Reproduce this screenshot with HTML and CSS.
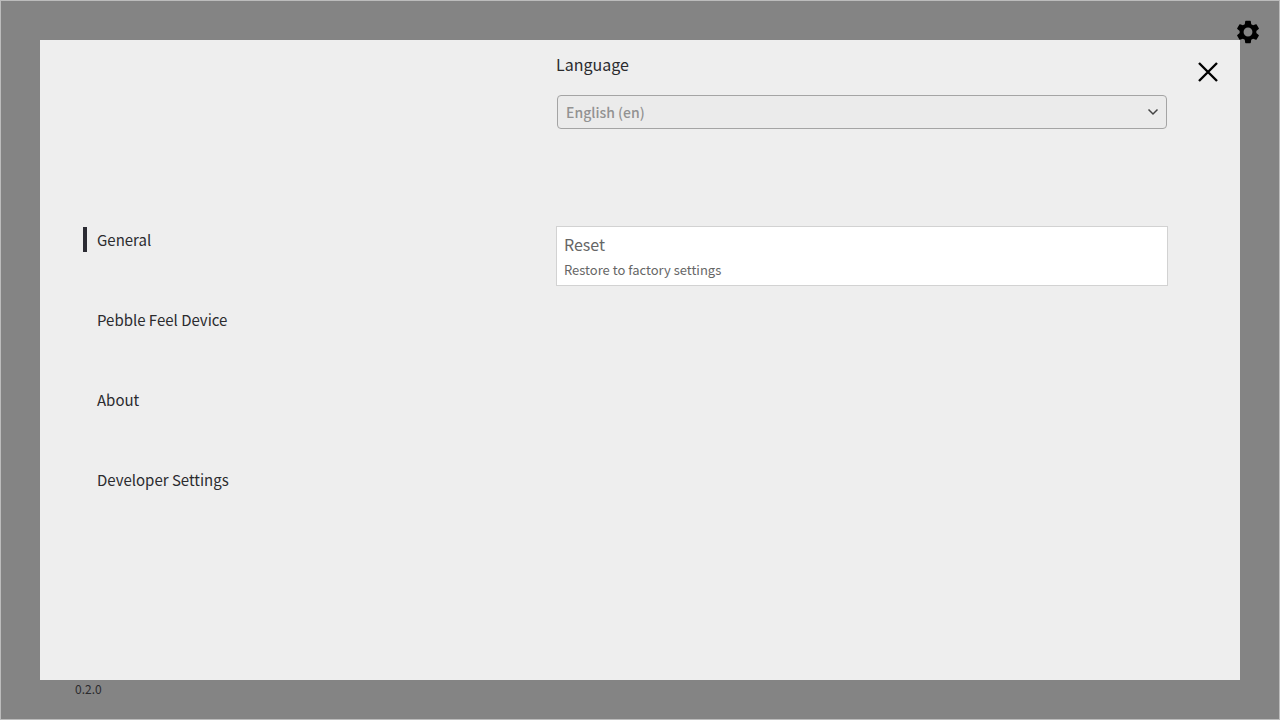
FILE: index.html
```html
<!DOCTYPE html>
<html lang="en">
<head>
<meta charset="UTF-8">
<meta name="viewport" content="width=device-width,initial-scale=1.0">
<title>Settings</title>
<link rel="stylesheet" href="styles.css">
</head>
<body>

<button class="gear" aria-label="Settings">
  <svg viewBox="0 0 24 24" width="28" height="28"><path d="M19.14 12.94c.04-.3.06-.61.06-.94 0-.32-.02-.64-.07-.94l2.03-1.58c.18-.14.23-.41.12-.61l-1.92-3.32c-.12-.22-.37-.29-.59-.22l-2.39.96c-.5-.38-1.03-.7-1.62-.94l-.36-2.54c-.04-.24-.24-.41-.48-.41h-3.84c-.24 0-.43.17-.47.41l-.36 2.54c-.59.24-1.13.57-1.62.94l-2.39-.96c-.22-.08-.47 0-.59.22L2.74 8.87c-.12.21-.08.47.12.61l2.03 1.58c-.05.3-.09.63-.09.94s.02.64.07.94l-2.03 1.58c-.18.14-.23.41-.12.61l1.92 3.32c.12.22.37.29.59.22l2.39-.96c.5.38 1.03.7 1.62.94l.36 2.54c.05.24.24.41.48.41h3.84c.24 0 .44-.17.47-.41l.36-2.54c.59-.24 1.13-.56 1.62-.94l2.39.96c.22.08.47 0 .59-.22l1.92-3.32c.12-.22.07-.47-.12-.61l-2.01-1.58zM12 15.8a3.8 3.8 0 1 1 0-7.6 3.8 3.8 0 0 1 0 7.6z"/></svg>
</button>

<main class="panel">
  <nav class="menu">
    <button class="menu-item active">General</button>
    <button class="menu-item">Pebble Feel Device</button>
    <button class="menu-item">About</button>
    <button class="menu-item">Developer Settings</button>
  </nav>

  <section class="content">
    <div class="field">
      <label for="language">Language</label>
      <div class="select-box">
        <select id="language">
          <option>English (en)</option>
        </select>
        <svg class="chevron" viewBox="0 0 12 12" width="12" height="12"><path d="M1.5 3.5L6 8l4.5-4.5"/></svg>
      </div>
    </div>

    <button class="reset">
      <span class="reset-title">Reset</span>
      <span class="reset-text">Restore to factory settings</span>
    </button>
  </section>

  <button class="close" aria-label="Close">
    <svg viewBox="0 0 24 24" width="24" height="24"><path d="M3 3l18 18M21 3L3 21"/></svg>
  </button>
</main>

<footer class="version">0.2.0</footer>

</body>
</html>
```
FILE: styles.css
```css
:root{
  --backdrop:#848484; --panel:#eee; --text:#2b2b2e; --muted:#666; --bar:#2b2b33;
}
*{box-sizing:border-box;margin:0;padding:0;font-family:"Noto Sans CJK JP","Noto Sans",sans-serif}
body{min-height:100vh;display:flex;flex-direction:column;padding:39px 39px 0;background:var(--backdrop);border:1px solid #bcbcbc;color:var(--text)}
button{border:none;background:none;color:inherit;text-align:left;cursor:pointer}
svg{display:block}

/* panel */
.panel{flex:1;display:grid;grid-template-columns:43% 51% 1fr;background:var(--panel)}

/* left menu */
.menu{display:flex;flex-direction:column;justify-content:center;align-items:flex-start;gap:55px;padding:0 0 2px 43px}
.menu-item{height:25px;padding-left:10px;border-left:4px solid transparent;font-size:15px;line-height:25px}
.menu-item.active{border-left-color:var(--bar)}

/* settings */
.content{display:flex;flex-direction:column;gap:97px;padding-top:12px}
.field{display:flex;flex-direction:column;gap:19px}
.field label{font-size:16px;line-height:24px}
.select-box{position:relative;margin:0 1px}
.select-box select{display:block;width:100%;height:34px;padding:0 32px 0 8px;border:1px solid #a4a4a4;border-radius:4px;background:#ebebeb;color:#929292;font-size:14px;font-weight:500;appearance:none}
.chevron{position:absolute;top:11px;right:8px;fill:none;stroke:#444;stroke-width:1.5;pointer-events:none}
.reset{display:flex;flex-direction:column;gap:4px;padding:5px 7px;border:1px solid #d2d2d2;background:#fff;color:var(--muted)}
.reset-title{font-size:16px;line-height:24px}
.reset-text{font-size:13px;line-height:20px}

/* icons */
.close{align-self:start;justify-self:end;margin:20px 20px 0 0}
.close svg{fill:none;stroke:#000;stroke-width:2.4}
.gear{position:absolute;top:18px;right:18px}

.version{padding-left:35px;height:39px;font-size:12px;line-height:17px}
```
